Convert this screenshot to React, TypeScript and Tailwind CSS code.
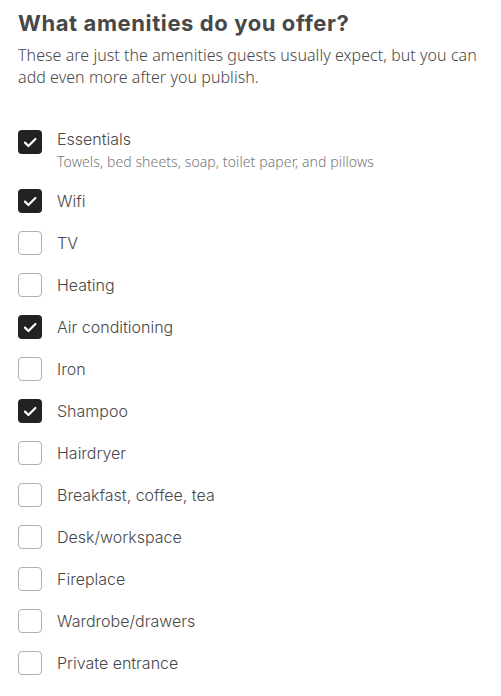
import React from "react";

const items: { label: string; desc?: string; checked: boolean }[] = [
  { label: "Essentials", desc: "Towels, bed sheets, soap, toilet paper, and pillows", checked: true },
  { label: "Wifi", checked: true },
  { label: "TV", checked: false },
  { label: "Heating", checked: false },
  { label: "Air conditioning", checked: true },
  { label: "Iron", checked: false },
  { label: "Shampoo", checked: true },
  { label: "Hairdryer", checked: false },
  { label: "Breakfast, coffee, tea", checked: false },
  { label: "Desk/workspace", checked: false },
  { label: "Fireplace", checked: false },
  { label: "Wardrobe/drawers", checked: false },
  { label: "Private entrance", checked: false },
];

function Box({ checked }: { checked: boolean }) {
  if (checked) {
    return (
      <div className="w-6 h-6 shrink-0 rounded-[4px] bg-[#222222]">
        <svg width="24" height="24" viewBox="0 0 24 24" fill="none">
          <path d="M7 12.6 L10.4 16 L17.4 9" stroke="white" strokeWidth="2.2" strokeLinecap="round" strokeLinejoin="round" />
        </svg>
      </div>
    );
  }
  return <div className="w-6 h-6 shrink-0 rounded-[4px] border border-[#b0b0b0] bg-white" />;
}

export default function App() {
  return (
    <div className="bg-white w-[501px] h-[696px] px-[18px] pt-[9px] text-[#484848] font-['Inter','Noto_Sans',sans-serif]">
      <h1 className="text-[22px] leading-[28px] font-bold tracking-[0.6px]">What amenities do you offer?</h1>
      <p className="mt-[7px] text-[16px] leading-[22px] font-light tracking-[0.05px] font-['Noto_Sans',sans-serif]">
        These are just the amenities guests usually expect, but you can add even more after you publish.
      </p>
      <div className="mt-[42px] flex flex-col gap-[18px]">
        {items.map((it) =>
          it.desc ? (
            <div key={it.label} className="flex items-start gap-[15px]">
              <Box checked={it.checked} />
              <div>
                <div className="text-[16px] leading-[18px] font-light">{it.label}</div>
                <div className="mt-[5px] text-[14px] leading-[18px] font-light text-[#767676] font-['Noto_Sans',sans-serif] tracking-[0.1px]">{it.desc}</div>
              </div>
            </div>
          ) : (
            <div key={it.label} className="flex items-center gap-[15px]">
              <Box checked={it.checked} />
              <div className="text-[16px] leading-[24px] font-light">{it.label}</div>
            </div>
          )
        )}
      </div>
    </div>
  );
}
